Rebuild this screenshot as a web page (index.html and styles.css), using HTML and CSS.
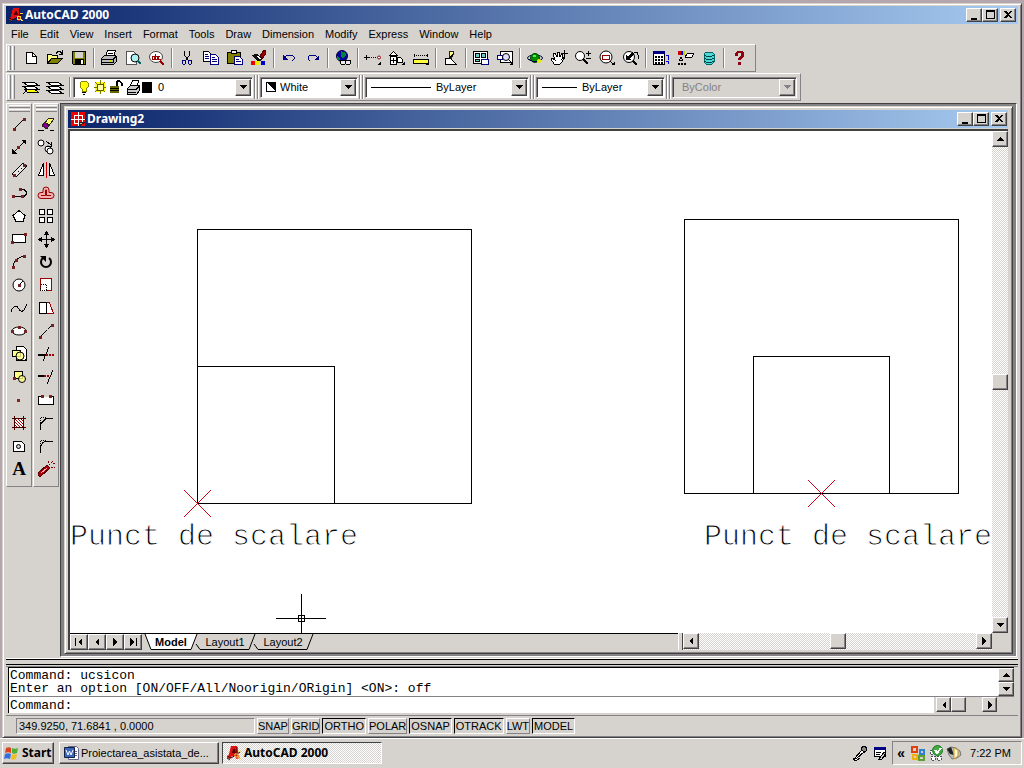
FILE: index.html
```html
<!DOCTYPE html>
<html lang="en">
<head>
<meta charset="utf-8">
<title>AutoCAD 2000</title>
<link rel="stylesheet" href="styles.css">
</head>
<body>
<svg class="defs" aria-hidden="true">
  <symbol id="acad" viewBox="0 0 16 16"><path d="M5 1h6l1 8 2 4-4 1-1-3H6l-2 3-3-1 2-4z" fill="#e01010"/><path d="M7 4h2l1 4H6z" fill="#500"/><path d="M11 2v7M1 11l4 2 5-3 4-3" stroke="#400" fill="none"/><path d="M9 9h3v3H9zM12 6l3 1M12 12l3 2" stroke="#ffd040" fill="none"/><path d="M1 13l3 2" stroke="#222"/></symbol>
  <symbol id="win-min" viewBox="0 0 14 12"><path d="M4 9h6v2H4z"/></symbol>
  <symbol id="win-max" viewBox="0 0 14 12"><path d="M3 1h9v9H3zM4 3v6h7V3z" fill-rule="evenodd"/></symbol>
  <symbol id="win-close" viewBox="0 0 14 12"><path d="M3 2h2l2 2 2-2h2L8 5.500l3 3.500H9L7 7 5 9H3l3-3.500z"/></symbol>
  <symbol id="up" viewBox="0 0 8 8"><path d="M4 2l4 4H0z"/></symbol>
  <symbol id="down" viewBox="0 0 8 8"><path d="M0 2h8L4 6z"/></symbol>
  <symbol id="left" viewBox="0 0 8 8"><path d="M2 4l4-4v8z"/></symbol>
  <symbol id="right" viewBox="0 0 8 8"><path d="M6 4L2 0v8z"/></symbol>
</svg>

<main class="window">
  <header class="titlebar">
    <svg class="app-icon"><use href="#acad"/></svg>
    <h1>AutoCAD 2000</h1>
    <button class="cap" aria-label="Minimize"><svg><use href="#win-min"/></svg></button>
    <button class="cap" aria-label="Maximize"><svg><use href="#win-max"/></svg></button>
    <button class="cap cap-close" aria-label="Close"><svg><use href="#win-close"/></svg></button>
  </header>

  <nav class="menubar">
    <button>File</button><button>Edit</button><button>View</button><button>Insert</button><button>Format</button><button>Tools</button><button>Draw</button><button>Dimension</button><button>Modify</button><button>Express</button><button>Window</button><button>Help</button>
  </nav>

  <div class="toolbar">
    <span class="grip"></span>
    <button aria-label="New"><svg viewBox="0 0 20 20"><path d="M5.500 4.500h6l4 4v7h-10z" fill="#fff" stroke="#000"/><path d="M11.500 4.500v4h4" fill="none" stroke="#000"/></svg></button>
    <button aria-label="Open"><svg viewBox="0 0 20 20"><path d="M2.500 15.500v-9h4l1 1h5v3" fill="#ffff80" stroke="#000"/><path d="M2.500 15.500l4-5h11l-5 5z" fill="#808000" stroke="#000"/><path d="M11 5.500l2-2h2l2 2M17.500 2v4h-4" fill="none" stroke="#000"/></svg></button>
    <button aria-label="Save"><svg viewBox="0 0 20 20"><path d="M3.500 3.500h13v13h-12l-1-1z" fill="#808000" stroke="#000"/><path d="M6 4h8v6H6z" fill="#d6d3ce"/><path d="M6 11h9v6H6z"/><path d="M12 12h2v4h-2z" fill="#fff"/></svg></button>
    <span class="sep"></span>
    <button aria-label="Print"><svg viewBox="0 0 20 20"><path d="M6.500 8.500l2-6h8l-2 6z" fill="#fff" stroke="#000"/><path d="M2.500 10.500l3-3h11l1 1v5l-3 3h-12z" fill="#bbb" stroke="#000"/><path d="M3 11.500h11l3-3M3 14.500h11V11M9 5.500h5" fill="none" stroke="#000"/><path d="M10 12h3v2h-3z" fill="#dd0"/></svg></button>
    <button aria-label="Print preview"><svg viewBox="0 0 20 20"><path d="M3.500 3.500h7l3 3v10h-10z" fill="#fff" stroke="#555"/><circle cx="12" cy="10" r="4" fill="#aef0f0" stroke="#000"/><path d="M15 13l3 3" stroke="#066" stroke-width="2"/></svg></button>
    <button aria-label="Find and replace"><svg viewBox="0 0 20 20"><ellipse cx="9" cy="9" rx="6.500" ry="5.500" fill="#fff" stroke="#444"/><path d="M13 13l4 4" stroke="#900" stroke-width="2"/><path d="M5 8h2v3H5zM8 6v5h2V8H8M13 8h-2v3h3" fill="none" stroke="#900"/></svg></button>
    <span class="sep"></span>
    <button aria-label="Cut"><svg viewBox="0 0 20 20"><path d="M7.500 3v4l4 6M12.500 3v4l-4 6" stroke="#000" fill="none"/><path d="M6 12h2l1 2-1 2H6l-1-2zM12 12h2l1 2-1 2h-2l-1-2z" stroke="#000080" fill="none"/></svg></button>
    <button aria-label="Copy"><svg viewBox="0 0 20 20"><path d="M2.500 3.500h5l3 3v7h-8z" fill="#fff" stroke="#000"/><path d="M9.500 6.500h5l3 3v7h-8z" fill="#fff" stroke="#000080"/><path d="M4 6.500h3M4 8.500h4M4 10.500h4M11 9.500h3M11 11.500h5M11 13.500h5" stroke="#000080"/></svg></button>
    <button aria-label="Paste"><svg viewBox="0 0 20 20"><path d="M2.500 4.500h13v11h-13z" fill="#808000" stroke="#000"/><path d="M6.500 2.500h5v3h-5z" fill="#eee" stroke="#000"/><path d="M9.500 8.500h5l3 3v5h-8z" fill="#fff" stroke="#000080"/><path d="M11 11.500h3M11 13.500h5" stroke="#000080"/></svg></button>
    <button aria-label="Match properties"><svg viewBox="0 0 20 20"><path d="M11 8l4-6h2l-1 5-3 4z" fill="#900" stroke="#500"/><path d="M2 7l6-1 5 5-3 3z" fill="#111"/><path d="M8 8l4 3" stroke="#fff"/><path d="M2 13h4v4H2z" fill="#e00"/><path d="M7 13h4v4H7z" fill="#ee0"/><path d="M12 13h4v4h-4z" fill="#00c"/></svg></button>
    <span class="sep"></span>
    <button aria-label="Undo"><svg viewBox="0 0 20 20"><path d="M4 7v5h5z" fill="#000080"/><path d="M6 9l2-2h5l2 2v2l-2 2" fill="none" stroke="#000080"/></svg></button>
    <button aria-label="Redo"><svg viewBox="0 0 20 20"><path d="M16 7v5h-5z" fill="#000080"/><path d="M14 9l-2-2H7L5 9v2l2 2" fill="none" stroke="#000080"/></svg></button>
    <span class="sep"></span>
    <button aria-label="Insert hyperlink"><svg viewBox="0 0 20 20"><circle cx="9" cy="8" r="5.500" fill="#0000a0" stroke="#003"/><path d="M8 3l5 2v3l-3 2-2-1zM4 8l3 3-1 1-2-1z" fill="#008040"/><path d="M8 12h4l1 2-1 2H8l-1-2zM13 12h4l1 2-1 2h-4l-1-2z" fill="#eee" stroke="#000"/></svg></button>
    <span class="sep"></span>
    <button aria-label="Tracking"><svg viewBox="0 0 20 20"><path d="M3 7v5M1 9.500h5" stroke="#000"/><path d="M6 9.500h8" stroke="#000" stroke-dasharray="1 1"/><circle cx="16" cy="9.500" r="1.500" fill="#fff" stroke="#900"/><path d="M18 13v4h-4z"/></svg></button>
    <button aria-label="UCS"><svg viewBox="0 0 20 20"><path d="M2.500 7.500l4-4 4 4zM3.500 8.500h6v8h-6z" fill="#fff" stroke="#000"/><path d="M6.500 10v5M4 12.500h5M10.500 9.500h3l2 2v3h-5z" fill="#fff" stroke="#000"/><path d="M18 13v4h-4z"/></svg></button>
    <button aria-label="Distance"><svg viewBox="0 0 20 20"><path d="M3 7.500h14" stroke="#000" stroke-dasharray="1 1"/><path d="M3.500 6v3M16.500 6v3" stroke="#000"/><path d="M2 11h16v5H2z"/><path d="M3 12h14v3H3z" fill="#ffff40"/><path d="M18 13v4h-4z"/></svg></button>
    <span class="sep"></span>
    <button aria-label="Redraw"><svg viewBox="0 0 20 20"><path d="M4.500 10.500h5l6 6h-11z" fill="#fff" stroke="#000"/><path d="M8 10l1-7h3l1 2-3 6z" fill="#ff8" stroke="#222"/><path d="M8 11l5-6" stroke="#000"/></svg></button>
    <span class="sep"></span>
    <button aria-label="Aerial view"><svg viewBox="0 0 20 20"><path d="M2.500 3.500h14v12h-14z" fill="#fff" stroke="#000"/><path d="M4.500 5.500h4v4h-4zM10.500 5.500h4v4h-4zM4.500 11.500h4v2h-4z" fill="#6cc" stroke="#000"/><path d="M10.500 11.500h7v5h-7z" fill="#fff" stroke="#000080"/></svg></button>
    <button aria-label="Named views"><svg viewBox="0 0 20 20"><path d="M5.500 3.500h12v11h-12z" fill="#fff" stroke="#000"/><path d="M2.500 7.500h5v4h-5z" fill="#fff" stroke="#000080"/><circle cx="11" cy="9" r="3.500" fill="#ddf" stroke="#000"/><path d="M13 11l3 3" stroke="#000"/><path d="M18 13v4h-4z"/></svg></button>
    <span class="sep"></span>
    <button aria-label="3D orbit"><svg viewBox="0 0 20 20"><ellipse cx="10" cy="10" rx="7.500" ry="3" fill="none" stroke="#004"/><circle cx="10" cy="10" r="4.500" fill="#080" stroke="#040"/><path d="M8 7h3v2H8z" fill="#4f4"/><path d="M3 11l4 2 6 0" fill="none" stroke="#004"/><circle cx="14" cy="13" r="2" fill="#ee0"/></svg></button>
    <button aria-label="Pan"><svg viewBox="0 0 20 20"><path d="M5 16l-3-5 1-1 3 2-2-6 2-1 2 4V4l2 0 1 5 2-4 1 1-1 5 3-2-3 5-3 3z" fill="#fff" stroke="#000"/><path d="M15.500 2v8M12 5.500h7" stroke="#000"/></svg></button>
    <button aria-label="Zoom realtime"><svg viewBox="0 0 20 20"><circle cx="7" cy="8" r="4.500" fill="#fff" stroke="#000"/><path d="M10 11l5 5" stroke="#000" stroke-width="2"/><path d="M13 5.500h5M15.500 3v5M13 10.500h5" stroke="#000"/></svg></button>
    <button aria-label="Zoom window"><svg viewBox="0 0 20 20"><circle cx="9" cy="9" r="6" fill="#fff" stroke="#000"/><path d="M5.500 7.500h7v4h-7z" fill="none" stroke="#900"/><path d="M13 13l3 3" stroke="#000"/><path d="M18 13v4h-4z"/></svg></button>
    <button aria-label="Zoom previous"><svg viewBox="0 0 20 20"><circle cx="8" cy="9" r="5.500" fill="#fff" stroke="#000"/><path d="M5 12V7l2 1 4-4 2 2-4 4 1 2z"/><path d="M12 13l4 4" stroke="#000" stroke-width="2"/><path d="M13 4h3l1 3v4" fill="none" stroke="#000"/></svg></button>
    <span class="sep"></span>
    <button aria-label="Properties"><svg viewBox="0 0 20 20"><path d="M2.500 3.500h11v13h-11z" fill="#fff" stroke="#000"/><path d="M2 3h12v3H2z" fill="#000080"/><path d="M4 8h2v2H4zM7 8h2v2H7zM10 8h2v2h-2zM4 11h2v2H4zM7 11h2v2H7zM10 11h2v2h-2zM4 14h2v2H4zM7 14h2v2H7zM10 14h2v2h-2z"/><path d="M15 7.500h2v4M15 13h2v3" fill="none" stroke="#00c"/></svg></button>
    <button aria-label="Design center"><svg viewBox="0 0 20 20"><path d="M3 3h3v4H3z" fill="#c00"/><path d="M6 3h2v4H6z" fill="#00c"/><path d="M8 3h2v4H8z" fill="#cc0"/><path d="M10 9l3-4h6l-2 4-4 1z" fill="#fff" stroke="#000"/><path d="M4 13l2-4 2 4M5 12h3" fill="none" stroke="#000"/><path d="M3 15h2v2H3zM6 15h2v2H6zM9 15h2v2H9z"/></svg></button>
    <button aria-label="Database connect"><svg viewBox="0 0 20 20"><path d="M5 6l2-2h6l2 2v8l-2 2H7l-2-2z" fill="#50d8d8" stroke="#066"/><path d="M5 7l2 1h6l2-1M5 10l2 1h6l2-1M5 13l2 1h6l2-1" fill="none" stroke="#044"/></svg></button>
    <span class="sep"></span>
    <button aria-label="Help"><svg viewBox="0 0 20 20"><path d="M6 8V5l2-2h5l2 2v3l-3 3v1H9v-2l3-3V5h-3v3zM9 14h3v3H9z" fill="#900010"/></svg></button>
  </div>

  <div class="toolbar toolbar-props">
    <span class="grip"></span>
    <button aria-label="Make object layer current"><svg viewBox="0 0 20 20"><path d="M2 5.500h11l4 2.500H6zM2 9.500h11l4 2.500H6z" fill="#fff" stroke="#000"/><path d="M4 12.500h10l3 2.500H6z" fill="#ff0" stroke="#000"/><path d="M2 17l4-4" stroke="#000"/></svg></button>
    <button aria-label="Layers"><svg viewBox="0 0 20 20"><path d="M2 5.500h11l4 2.500H6zM2 9.500h11l4 2.500H6zM2 13.500h11l4 2.500H6z" fill="#fff" stroke="#000"/></svg></button>
    <span class="sep"></span>
    <div class="combo combo-layer">
      <svg class="layer-icons" viewBox="0 0 78 18"><path d="M7 3h4l2 2v4l-2 2v2H7v-2L5 9V5z" fill="#ff0" stroke="#880"/><path d="M7 14.500h4M8 16.500h2" stroke="#000"/><path d="M20 4h10v10H20z" fill="#ff0"/><path d="M22 6h6v6h-6z" fill="#ffa" stroke="#550"/><path d="M19 9h3M28 9h3M25 2v4M25 12v4M20 4l2 2M30 4l-2 2M20 14l2-2M30 14l-2-2" stroke="#770"/><path d="M35 8h9v7h-9z" fill="#660"/><path d="M35 10.500h9M35 12.500h9" stroke="#000"/><path d="M41.500 8V4l1-1h2l2 2v3" fill="none" stroke="#000" stroke-width="2"/><path d="M55 8l3-6h6l-2 6z" fill="#fff" stroke="#000"/><path d="M52.500 10.500l3-3h9v5l-3 4h-9z" fill="#ccc" stroke="#000"/><path d="M53 11.500h8l3-3M53 14h8" fill="none" stroke="#000"/><path d="M67 4h10v11H67z"/></svg>
      <select aria-label="Layer"><option>0</option></select>
      <span class="drop"><svg><use href="#down"/></svg></span>
    </div>
    <span class="dblsep"></span>
    <div class="combo combo-color">
      <svg class="swatch" viewBox="0 0 10 10"><path d="M0 0h10v10H0z"/><path d="M1 1v8h8z" fill="#fff"/></svg>
      <select aria-label="Color"><option>White</option></select>
      <span class="drop"><svg><use href="#down"/></svg></span>
    </div>
    <span class="dblsep"></span>
    <div class="combo combo-ltype">
      <span class="line line-long"></span>
      <select aria-label="Linetype"><option>ByLayer</option></select>
      <span class="drop"><svg><use href="#down"/></svg></span>
    </div>
    <span class="dblsep"></span>
    <div class="combo combo-lweight">
      <span class="line line-short"></span>
      <select aria-label="Lineweight"><option>ByLayer</option></select>
      <span class="drop"><svg><use href="#down"/></svg></span>
    </div>
    <span class="dblsep"></span>
    <div class="combo combo-plot">
      <select aria-label="Plot style" disabled><option>ByColor</option></select>
      <span class="drop"><svg><use href="#down"/></svg></span>
    </div>
  </div>

  <div class="workspace">
    <div class="palette">
      <span class="grip-h"></span>
      <button aria-label="Line"><svg viewBox="0 0 20 20"><path d="M5 15L15 5" stroke="#000"/><path d="M4 14h3v3H4zM14 4h3v3h-3z" fill="#722"/></svg></button>
      <button aria-label="Construction line"><svg viewBox="0 0 20 20"><path d="M4 16L16 4" stroke="#000"/><path d="M3 17v-5l5 5zM17 3v5l-5-5z"/><path d="M8 9h3v3H8z" fill="#722"/></svg></button>
      <button aria-label="Multiline"><svg viewBox="0 0 20 20"><path d="M3 14L14 3l4 3L7 17z" stroke="#000" fill="#e8e6e2"/><path d="M6 15L16 5" stroke="#000" stroke-dasharray="2 2"/><path d="M4 14h3v3H4zM14 4h3v3h-3z" fill="#722"/></svg></button>
      <button aria-label="Polyline"><svg viewBox="0 0 20 20"><path d="M4 13.500h11l2-2v-3l-2-2h-3" fill="none" stroke="#000"/><path d="M3 12h3v3H3zM12 12h3v3h-3zM10 5h3v3h-3z" fill="#722"/></svg></button>
      <button aria-label="Polygon"><svg viewBox="0 0 20 20"><path d="M10 4.500l6 5-2 6H7l-3-6z" fill="#fff" stroke="#000"/></svg></button>
      <button aria-label="Rectangle"><svg viewBox="0 0 20 20"><path d="M3.500 5.500h13v8h-13z" fill="#fff" stroke="#000"/><path d="M2 12h3v3H2zM15 4h3v3h-3z" fill="#722"/></svg></button>
      <button aria-label="Arc"><svg viewBox="0 0 20 20"><path d="M4 15c0-5 4-10 12-11" fill="none" stroke="#000"/><path d="M3 14h3v3H3zM6 7h3v3H6zM14 3h3v3h-3z" fill="#722"/></svg></button>
      <button aria-label="Circle"><svg viewBox="0 0 20 20"><circle cx="10" cy="10" r="6" fill="#fff" stroke="#000"/><path d="M10 10l4-4" stroke="#000"/><path d="M9 9h3v3H9z" fill="#722"/></svg></button>
      <button aria-label="Spline"><svg viewBox="0 0 20 20"><path d="M2 14c2-7 6-7 8-3s5 3 8-5" fill="none" stroke="#000"/></svg></button>
      <button aria-label="Ellipse"><svg viewBox="0 0 20 20"><ellipse cx="10" cy="10" rx="7" ry="4" fill="#fff" stroke="#000"/><path d="M2 9h3v3H2zM9 5h3v3H9zM15 9h3v3h-3z" fill="#722"/></svg></button>
      <button aria-label="Insert block"><svg viewBox="0 0 20 20"><path d="M7.500 2.500h7l3 3v11h-10z" fill="#fff" stroke="#000"/><path d="M3.500 6.500h8v6h-8z" fill="#ff8" stroke="#000"/><circle cx="11" cy="12" r="4" fill="#ff8" fill-opacity=".8" stroke="#000"/><path d="M18 13v4h-4z"/></svg></button>
      <button aria-label="Make block"><svg viewBox="0 0 20 20"><path d="M5.500 4.500h8v7h-8z" fill="#ff8" stroke="#000"/><circle cx="13" cy="12" r="3.500" fill="#ff8" fill-opacity=".8" stroke="#000"/><path d="M4 10h3v3H4z" fill="#722"/></svg></button>
      <button aria-label="Point"><svg viewBox="0 0 20 20"><path d="M8 9h3v3H8z" fill="#822"/></svg></button>
      <button aria-label="Hatch"><svg viewBox="0 0 20 20"><path d="M5 5h10v10H5z" fill="#fff"/><path d="M5 5l10 10M5 8l7 7M5 11l4 4M8 5l7 7M11 5l4 4" stroke="#a00"/><path d="M3 5.500h14M3 14.500h14M5.500 3v14M14.500 3v14" stroke="#400"/></svg></button>
      <button aria-label="Region"><svg viewBox="0 0 20 20"><path d="M4.500 5.500h8l3 3v7h-11z" fill="#fff" stroke="#000"/><circle cx="9.500" cy="10.500" r="2" fill="#ccc" stroke="#000"/></svg></button>
      <button class="text-tool" aria-label="Multiline text">A</button>
    </div>
    <div class="palette">
      <span class="grip-h"></span>
      <button aria-label="Erase"><svg viewBox="0 0 20 20"><path d="M6 12l7-8 5 1-7 9z" fill="#ff6" stroke="#222"/><path d="M6 12l3-4 4 3-2 4z" fill="#808" stroke="#222"/><path d="M2 16.500h6M14 16.500h4" stroke="#000"/></svg></button>
      <button aria-label="Copy object"><svg viewBox="0 0 20 20"><circle cx="5" cy="6" r="3" fill="#fff" stroke="#000"/><circle cx="12" cy="12" r="3" fill="#fff" stroke="#000"/><circle cx="14" cy="14" r="3" fill="#fff" stroke="#000"/><path d="M10 4l5 4M15 5v4h-4" stroke="#000" fill="none"/></svg></button>
      <button aria-label="Mirror"><svg viewBox="0 0 20 20"><path d="M7.500 3v12.500h-5zM13.500 3v12.500h5z" fill="#fff" stroke="#000"/><path d="M10.500 2v16" stroke="#c00"/></svg></button>
      <button aria-label="Offset"><svg class="smooth" viewBox="0 0 20 20"><path d="M5 15.500a3 3 0 0 1 0-6h2V7a3 3 0 0 1 6 0v2.500h2a3 3 0 0 1 0 6z" fill="#f4b0b0" stroke="#900"/><path d="M5 12.500h4.500V7h1v5.500H15" fill="none" stroke="#900"/></svg></button>
      <button aria-label="Array"><svg viewBox="0 0 20 20"><path d="M3.500 3.500h5v5h-5zM11.500 3.500h5v5h-5zM3.500 11.500h5v5h-5zM11.500 11.500h5v5h-5z" fill="#fff" stroke="#000"/></svg></button>
      <button aria-label="Move"><svg viewBox="0 0 20 20"><path d="M10.500 4v13M4 10.500h13" stroke="#000"/><path d="M10.500 2l3 4h-6zM10.500 19l3-4h-6zM2 10.500l4-3v6zM19 10.500l-4-3v6z"/></svg></button>
      <button aria-label="Rotate"><svg class="smooth" viewBox="0 0 20 20"><path d="M7 6a5 5 0 1 0 6 0" fill="none" stroke="#000" stroke-width="2"/><path d="M4 4h6v6z"/></svg></button>
      <button aria-label="Scale"><svg viewBox="0 0 20 20"><path d="M4.500 3.500h11v12h-11z" fill="#fff" stroke="#900"/><path d="M4.500 9.500h6v6h-6z" fill="#fff" stroke="#000" stroke-dasharray="1 1"/></svg></button>
      <button aria-label="Stretch"><svg viewBox="0 0 20 20"><path d="M3.500 4.500h7v11h-7z" fill="#fff" stroke="#000"/><path d="M10.500 4.500h3l4 11h-7" fill="#fff" stroke="#900"/></svg></button>
      <button aria-label="Lengthen"><svg viewBox="0 0 20 20"><path d="M4 16l6-6" stroke="#000"/><path d="M10 10l6-6" stroke="#000" stroke-dasharray="2 1"/><path d="M3 15h3v3H3zM15 3h3v3h-3z" fill="#722"/></svg></button>
      <button aria-label="Trim"><svg viewBox="0 0 20 20"><path d="M7 17l6-14" stroke="#000"/><path d="M2 10h8v2H2z"/><path d="M10 11h8" stroke="#900" stroke-width="2" stroke-dasharray="2 1"/></svg></button>
      <button aria-label="Extend"><svg viewBox="0 0 20 20"><path d="M11 17l6-14" stroke="#000"/><path d="M2 8h6v2H2z"/><path d="M8 9h6" stroke="#900" stroke-width="2" stroke-dasharray="2 1"/></svg></button>
      <button aria-label="Break"><svg viewBox="0 0 20 20"><path d="M6 6.500H2.500v8h15v-8H14" fill="#fff" stroke="#000"/><path d="M5 5h3v3H5zM13 5h3v3h-3z" fill="#722"/></svg></button>
      <button aria-label="Chamfer"><svg viewBox="0 0 20 20"><path d="M4.500 17v-6l6-6h6" fill="none" stroke="#000"/><path d="M4.500 10V4.500H10" fill="none" stroke="#000" stroke-dasharray="1 1"/></svg></button>
      <button aria-label="Fillet"><svg viewBox="0 0 20 20"><path d="M4.500 17v-4c0-5 3-8 8-8h4" fill="none" stroke="#000"/><path d="M4.500 10V4.500H10" fill="none" stroke="#000" stroke-dasharray="1 1"/></svg></button>
      <button aria-label="Explode"><svg viewBox="0 0 20 20"><path d="M2 14l9-8 3 3-9 8H3z" fill="#b00010" stroke="#500"/><path d="M5 14l6-5" stroke="#faa"/><path d="M13 6l4-4M12 2v3M15 8h4M17 5l2-1" stroke="#700" stroke-dasharray="2 1"/></svg></button>
    </div>

    <div class="mdi">
      <section class="child">
        <header class="titlebar">
          <svg class="app-icon" viewBox="0 0 16 16"><path d="M1 1h14v14H1z" fill="#e00"/><path d="M8 1v14M1 8h14M4 4h8v8H4z" fill="none" stroke="#fff"/><path d="M9 15v-4h6z" fill="#bbb" stroke="#222"/></svg>
          <h2>Drawing2</h2>
          <button class="cap" aria-label="Minimize drawing"><svg><use href="#win-min"/></svg></button>
          <button class="cap" aria-label="Maximize drawing"><svg><use href="#win-max"/></svg></button>
          <button class="cap cap-close" aria-label="Close drawing"><svg><use href="#win-close"/></svg></button>
        </header>
        <div class="client">
          <svg class="drawing" role="img" aria-label="Model space">
            <g fill="none" stroke="#000" shape-rendering="crispEdges">
              <path d="M127.500 98.500h274v274h-274zM127.500 235.500h137v137"/>
              <path d="M614.500 88.500h274v274h-274zM683.500 362.500v-137h136v137"/>
              <path d="M231.500 463v42M206 487.500h50M228.500 484.500h6v6h-6z"/>
            </g>
            <g fill="none" stroke="#d80018" shape-rendering="crispEdges">
              <path d="M114 359l27 27M141 359l-27 27M738 349l27 27M765 349l-27 27"/>
            </g>
            <text class="cad-text" x="0" y="414">Punct de scalare</text>
            <text class="cad-text" x="634" y="414">Punct de scalare</text>
          </svg>
          <div class="vscroll">
            <button aria-label="Scroll up"><svg><use href="#up"/></svg></button>
            <span class="thumb"></span>
            <button aria-label="Scroll down"><svg><use href="#down"/></svg></button>
          </div>
        </div>
        <div class="tabrow">
          <div class="tabs">
            <button class="nav" aria-label="First"><svg viewBox="0 0 10 8"><path d="M1 0h1v8H1zM4 4l4-4v8z"/></svg></button>
            <button class="nav" aria-label="Previous"><svg viewBox="0 0 10 8"><path d="M3 4l4-4v8z"/></svg></button>
            <button class="nav" aria-label="Next"><svg viewBox="0 0 10 8"><path d="M7 4L3 0v8z"/></svg></button>
            <button class="nav" aria-label="Last"><svg viewBox="0 0 10 8"><path d="M8 0h1v8H8zM6 4L2 0v8z"/></svg></button>
            <button class="tab active"><svg viewBox="0 0 52 16" preserveAspectRatio="none"><path d="M0 0l6 15.500h40L52 0" fill="#fff" stroke="#000"/></svg><span>Model</span></button>
            <button class="tab"><svg viewBox="0 0 60 16" preserveAspectRatio="none"><path d="M1 10l4 5.500h49L60 0" fill="none" stroke="#000"/></svg><span>Layout1</span></button>
            <button class="tab"><svg viewBox="0 0 60 16" preserveAspectRatio="none"><path d="M1 10l4 5.500h49L60 0" fill="none" stroke="#000"/></svg><span>Layout2</span></button>
          </div>
          <div class="hscroll">
            <span class="splitter"></span>
            <button aria-label="Scroll left"><svg><use href="#left"/></svg></button>
            <span class="thumb"></span>
            <button aria-label="Scroll right"><svg><use href="#right"/></svg></button>
          </div>
        </div>
      </section>
    </div>
  </div>

  <section class="command">
    <div class="history">
      <pre>Command: ucsicon
Enter an option [ON/OFF/All/Noorigin/ORigin] &lt;ON&gt;: off</pre>
      <div class="mini-v">
        <button aria-label="History up"><svg><use href="#up"/></svg></button>
        <button aria-label="History down"><svg><use href="#down"/></svg></button>
      </div>
    </div>
    <div class="prompt">
      <label for="cmd">Command:</label><input id="cmd" type="text">
      <div class="mini-h">
        <button aria-label="Command left"><svg><use href="#left"/></svg></button>
        <span class="thumb"></span>
        <button aria-label="Command right"><svg><use href="#right"/></svg></button>
      </div>
    </div>
  </section>

  <footer class="status">
    <output class="coords">349.9250, 71.6841 , 0.0000</output>
    <button>SNAP</button><button>GRID</button><button class="on">ORTHO</button><button>POLAR</button><button class="on">OSNAP</button><button class="on">OTRACK</button><button>LWT</button><button class="on">MODEL</button>
  </footer>
</main>

<footer class="taskbar">
  <button class="start"><svg viewBox="0 0 16 16"><path d="M2 3c2-1 4-1 5 0v5c-2-1-4-1-6 0z" fill="#e04020"/><path d="M8 3c2 1 4 1 6 0l-1 5c-2 1-4 1-5 0z" fill="#50b030"/><path d="M1 9c2-1 4-1 6 0l-1 5c-2-1-4-1-6 0z" fill="#3070e0"/><path d="M8 9c1 1 3 1 5 0l-1 5c-2 1-4 1-5 0z" fill="#f0c020"/></svg>Start</button>
  <button class="task"><svg viewBox="0 0 16 16"><path d="M5.500 1.500h8l2 2v11h-10z" fill="#fff" stroke="#668"/><path d="M1.500 2.500h10v10h-10z" fill="#3a66c0" stroke="#124"/><path d="M3 5l2 5 1.500-4L8 10l2-5" fill="none" stroke="#fff"/><path d="M12 6.500h2M12 8.500h2M12 10.500h2" stroke="#668"/></svg><span>Proiectarea_asistata_de...</span></button>
  <button class="task current"><svg><use href="#acad"/></svg><span>AutoCAD 2000</span></button>
  <span class="spacer"></span>
  <svg class="tray-icon" viewBox="0 0 16 16"><path d="M9 3l3-2 3 2-1 3-3 2z" fill="#888" stroke="#000"/><path d="M10 5l-7 8 1 1 8-7zM3 13l-2 1 3 2 4-3" fill="#fff" stroke="#000"/></svg>
  <svg class="tray-icon" viewBox="0 0 16 16"><path d="M2.500 2.500h11v9h-11z" fill="#fff" stroke="#000"/><path d="M2 2h12v3H2z" fill="#000080"/><path d="M4 7.500h5M4 9.500h4" stroke="#000"/><path d="M7 14l5-7 2 1-4 6z" fill="#ccc" stroke="#000"/></svg>
  <div class="tray">
    <span class="chev">«</span>
    <svg viewBox="0 0 16 16"><path d="M2 2h5v5H2z" fill="none" stroke="#e04010" stroke-width="2"/><path d="M10 5h4v4h-4z" fill="none" stroke="#3080d0" stroke-width="2"/><path d="M3 10h4v4H3z" fill="none" stroke="#f0b010" stroke-width="2"/><path d="M9 11h5v4H9z" fill="none" stroke="#60a030" stroke-width="2"/></svg>
    <svg viewBox="0 0 16 16"><path d="M2 5h4v4H2zM3 11h4v4H3zM9 11h4v4H9z" fill="#fff" stroke="#456" stroke-dasharray="2 1"/><circle cx="9.500" cy="5.500" r="5" fill="#4a4" stroke="#272"/><path d="M7 5l2 3 4-5" stroke="#fff" fill="none" stroke-width="2"/></svg>
    <svg class="smooth" viewBox="0 0 16 16"><path d="M1 4l4-2 5 1 4 3 1 4-4 3-5 1-3-4z" fill="#bbb" stroke="#777"/><path d="M1 4l4-2 3 8-4-1z" fill="#222"/><path d="M8 3l4 2 0 6-4 3z" fill="#fff8d0" stroke="#c92"/></svg>
    <time>7:22 PM</time>
  </div>
</footer>
</body>
</html>
```
FILE: styles.css
```css
* { box-sizing: border-box; }
:root {
  --face: #d6d3ce;
  --shade: #848284;
  --dark: #424142;
  --track: repeating-conic-gradient(#fff 0 25%, #d6d3ce 0 50%) 0 0 / 2px 2px;
}
body {
  margin: 0;
  height: 100vh;
  display: flex;
  flex-direction: column;
  overflow: hidden;
  background: #b5a6ad;
  color: #000;
  font: 11px/14px "Liberation Sans", Arial, sans-serif;
}
button, select, input { font: inherit; color: inherit; margin: 0; padding: 0; border: 0; background: none; border-radius: 0; }
h1, h2, pre { margin: 0; }
svg { display: block; shape-rendering: crispEdges; flex: none; }
circle, ellipse, .smooth { shape-rendering: auto; }
.defs { width: 0; height: 0; position: absolute; }

.window {
  flex: 1;
  min-height: 0;
  margin: 3px 2px 0;
  padding: 2px 3px 1px;
  display: flex;
  flex-direction: column;
  background: var(--face);
  border: 1px solid var(--face);
  border-right-color: var(--dark);
  border-bottom-color: var(--dark);
  box-shadow: inset 1px 1px #fff, inset -1px -1px var(--shade);
}
.titlebar {
  display: flex;
  align-items: center;
  height: 18px;
  flex: none;
  padding: 0 2px;
  background: linear-gradient(90deg, #0a246a, #a6caf0);
  color: #fff;
}
.child .titlebar { padding-right: 1px; }
.titlebar h1, .titlebar h2 { flex: 1; padding-left: 1px; font: bold 12px/18px "Noto Sans", sans-serif; }
.app-icon { width: 16px; height: 16px; }
.cap, .nav, .vscroll button, .hscroll button, .thumb, .mini-v button, .mini-h button, .drop {
  display: flex;
  align-items: center;
  justify-content: center;
  background: var(--face);
  border: 1px solid #fff;
  border-right-color: var(--dark);
  border-bottom-color: var(--dark);
  box-shadow: inset -1px -1px var(--shade);
}
.cap { width: 16px; height: 14px; color: #000; }
.cap svg { width: 14px; height: 12px; }
.cap-close { margin-left: 2px; }

.menubar { display: flex; gap: 11px; height: 20px; padding-left: 5px; flex: none; }
.menubar button { line-height: 20px; }

.toolbar {
  display: flex;
  align-items: center;
  align-self: flex-start;
  height: 28px;
  flex: none;
  padding: 0 4px 0 1px;
  border: 1px solid #fff;
  border-right-color: var(--shade);
  border-bottom-color: var(--shade);
}
.toolbar > button { width: 24px; height: 22px; display: flex; align-items: center; justify-content: center; flex: none; }
.toolbar > button svg, .palette svg { width: 20px; height: 20px; }
.toolbar-props { margin: 1px 0; padding-right: 3px; }
.grip { width: 7px; height: 24px; margin-right: 4px; background: linear-gradient(90deg, #fff 1px, #d6d3ce 1px 2px, #848284 2px 3px, #d6d3ce 3px 4px, #fff 4px 5px, #d6d3ce 5px 6px, #848284 6px); flex: none; }
.sep { width: 2px; height: 20px; margin: 0 2px; border-left: 1px solid var(--shade); border-right: 1px solid #fff; flex: none; }
.dblsep { width: 4px; height: 24px; margin: 0 2px 0 1px; border-left: 1px solid var(--shade); border-right: 1px solid var(--shade); box-shadow: inset 1px 0 #fff, 1px 0 #fff; flex: none; }
.combo {
  display: flex;
  align-items: center;
  height: 21px;
  padding: 1px;
  background: #fff;
  border: 1px solid var(--shade);
  border-right-color: #fff;
  border-bottom-color: #fff;
  box-shadow: inset 1px 1px var(--dark);
}
.combo select { appearance: none; flex: 1; min-width: 0; height: 17px; padding-left: 5px; line-height: 17px; opacity: 1; }
.combo .drop { width: 16px; height: 17px; flex: none; }
.drop svg { width: 8px; height: 8px; }
.combo-layer { width: 180px; }
.layer-icons { width: 78px; height: 18px; }
.combo-color { width: 98px; }
.swatch { width: 10px; height: 10px; margin-left: 4px; }
.combo-color select { padding-left: 4px; }
.combo-ltype { width: 164px; }
.combo-lweight { width: 129px; }
.line { height: 1px; margin-left: 4px; background: #000; }
.line-long { width: 60px; }
.line-short { width: 35px; }
.combo-plot { width: 125px; background: var(--face); color: var(--shade); }
.combo-plot select { padding-left: 8px; }
.combo-plot svg { fill: var(--shade); }

.workspace { flex: 1; min-height: 0; display: flex; align-items: flex-start; gap: 1px; padding: 1px 1px 0 0; }
.palette {
  width: 26px;
  display: flex;
  flex-direction: column;
  align-items: center;
  padding-bottom: 6px;
  border: 1px solid #fff;
  border-right-color: var(--shade);
  border-bottom-color: var(--shade);
}
.palette button { width: 24px; height: 23px; display: flex; align-items: center; justify-content: center; }
.grip-h { width: 21px; height: 7px; margin-top: 1px; background: linear-gradient(#fff 1px, #d6d3ce 1px 2px, #848284 2px 3px, #d6d3ce 3px 4px, #fff 4px 5px, #d6d3ce 5px 6px, #848284 6px); flex: none; }
.palette .text-tool { font: bold 19px/23px "Liberation Serif", serif; }

.mdi { flex: 1; min-width: 0; align-self: stretch; padding: 2px 3px; background: #848284; border: 1px solid var(--dark); border-right-color: #fff; border-bottom-color: #fff; }
.child {
  height: 100%;
  display: flex;
  flex-direction: column;
  padding: 3px 4px 3px 3px;
  background: var(--face);
  border: 1px solid var(--face);
  border-right-color: var(--dark);
  border-bottom-color: var(--dark);
  box-shadow: inset 1px 1px #fff, inset -1px -1px var(--shade);
}
.child .titlebar { margin-bottom: 1px; }
.client { flex: 1; min-height: 0; display: flex; background: #fff; border: solid; border-width: 2px 0 0 2px; border-color: var(--dark); }
.drawing { flex: 1; min-width: 0; height: 100%; }
.cad-text { font: 30px "Liberation Mono", "Courier New", monospace; fill: #000; stroke: #fff; stroke-width: 1px; }
.vscroll { width: 16px; display: flex; flex-direction: column; justify-content: space-between; background: var(--track); }
.vscroll > *, .hscroll > button, .hscroll .thumb { width: 16px; height: 16px; flex: none; }
.vscroll svg, .hscroll svg { width: 8px; height: 8px; }

.tabrow { display: flex; height: 17px; flex: none; border-left: 2px solid var(--dark); }
.tabs { flex: 608; display: flex; border-top: 1px solid #000; }
.nav { width: 18px; height: 16px; flex: none; }
.nav svg { width: 10px; height: 8px; }
.tab { position: relative; width: 60px; height: 16px; margin-left: -2px; flex: none; }
.tab svg { position: absolute; inset: 0; width: 100%; height: 100%; overflow: visible; shape-rendering: auto; }
.tab span { position: relative; line-height: 14px; }
.tab.active { width: 52px; margin-left: 3px; font-weight: bold; }
.hscroll { flex: 314; display: flex; justify-content: space-between; margin-right: 16px; background: var(--track); }
.hscroll .splitter { width: 5px; background: var(--face); border-left: 1px solid #fff; border-right: 1px solid var(--dark); }
.hscroll .splitter + button { margin-right: auto; }
.hscroll .thumb { margin-right: auto; }

.command { margin-top: 1px; padding: 9px 4px 2px 2px; flex: none; background: linear-gradient(#fff 0 1px, #000 1px 2px, #d6d3ce 2px 6px, #000 6px 7px, #d6d3ce 7px 8px, #848284 8px 9px, #d6d3ce 9px); font: 13px/13px "Liberation Mono", "Courier New", monospace; border-bottom: 1px solid var(--shade); }
.history { display: flex; background: #fff; border: 1px solid #000; border-width: 1px 0 0 1px; border-bottom: 1px solid var(--shade); }
.history pre { flex: 1; min-width: 0; padding: 1px 0 1px 1px; font: inherit; }
.mini-v { width: 16px; background: var(--face); }
.mini-v button { width: 16px; height: 14px; }
.mini-v svg, .mini-h svg { width: 8px; height: 8px; }
.prompt { display: flex; height: 16px; padding-left: 1px; border-left: 1px solid #000; background: #fff; }
.prompt label { line-height: 18px; }
.prompt input { flex: 1; min-width: 0; padding-left: 8px; outline: 0; }
.mini-h { display: flex; width: 80px; padding: 0 17px 0 2px; background: var(--face); justify-content: space-between; }
.mini-h > * { width: 15px; height: 15px; }
.mini-h .thumb { margin-right: auto; }

.status { display: flex; align-items: center; gap: 2px; height: 20px; padding-left: 10px; flex: none; }
.coords { width: 239px; height: 16px; padding-left: 2px; line-height: 14px; border: 1px solid var(--shade); border-right-color: #fff; border-bottom-color: #fff; }
.status button { height: 16px; line-height: 14px; border: 1px solid #fff; border-right-color: var(--shade); border-bottom-color: var(--shade); }
.status .on { padding: 0 1px; border-color: #000 #fff #fff #000; }

.taskbar { display: flex; align-items: center; height: 30px; flex: none; padding: 1px 2px 2px; background: var(--face); border-top: 1px solid #fff; }
.start, .task { display: flex; align-items: center; height: 22px; padding: 0 3px; border: 1px solid #fff; border-right-color: var(--dark); border-bottom-color: var(--dark); box-shadow: inset -1px -1px var(--shade); }
.start svg, .task svg, .tray-icon, .tray svg { width: 16px; height: 16px; }
.start svg, .task svg { margin-right: 2px; shape-rendering: auto; }
.start { width: 52px; margin-right: 5px; padding: 0 1px; font: bold 12px/18px "Noto Sans", sans-serif; }
.task { width: 160px; margin-right: 3px; }
.task span { white-space: nowrap; }
.task.current { background: var(--track); border-color: var(--dark) #fff #fff var(--dark); box-shadow: none; font: bold 12px/18px "Noto Sans", sans-serif; }
.spacer { flex: 1; }
.tray-icon { margin-right: 4px; }
.tray { display: flex; align-items: center; gap: 2px; height: 24px; padding: 0 10px 0 4px; border: 1px solid var(--shade); border-right-color: #fff; border-bottom-color: #fff; }
.chev { font: bold 14px/14px "Liberation Sans", sans-serif; margin-right: 3px; }
.tray time { margin-left: 6px; }
```
